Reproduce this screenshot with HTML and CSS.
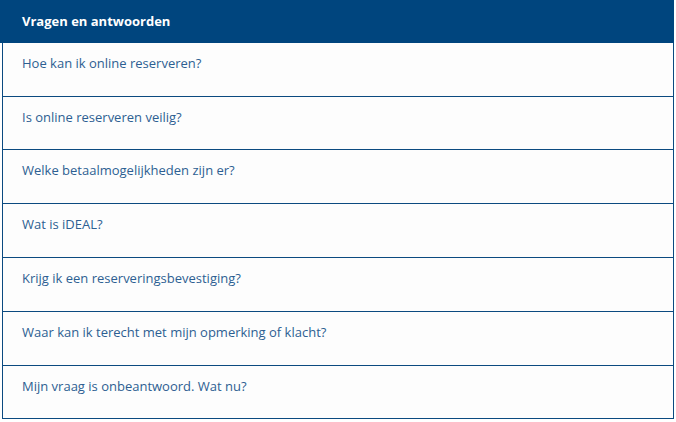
FILE: index.html
```html
<!DOCTYPE html>
<html lang="nl">
<head>
    <meta charset="utf-8">
    <title>Vragen en antwoorden</title>
    <link rel="stylesheet" href="styles.css">
</head>
<body>
    <div class="faq">
        <div class="faq-header">Vragen en antwoorden</div>
        <div class="faq-list">
            <div class="faq-item">Hoe kan ik online reserveren?</div>
            <div class="faq-item faq-item-short">Is online reserveren veilig?</div>
            <div class="faq-item">Welke betaalmogelijkheden zijn er?</div>
            <div class="faq-item">Wat is iDEAL?</div>
            <div class="faq-item">Krijg ik een reserveringsbevestiging?</div>
            <div class="faq-item">Waar kan ik terecht met mijn opmerking of klacht?</div>
            <div class="faq-item">Mijn vraag is onbeantwoord. Wat nu?</div>
        </div>
    </div>
</body>
</html>
```

FILE: styles.css
```css
body {
    margin: 0;
    background: #ffffff;
    font-family: "Open Sans", "Noto Sans", sans-serif;
}

.faq {
    width: 674px;
}

.faq-header {
    height: 43px;
    box-sizing: border-box;
    padding: 12px 22px 0;
    background: #00457e;
    color: #ffffff;
    font-size: 13px;
    font-weight: 700;
}

.faq-list {
    margin-left: 2px;
    width: 672px;
    box-sizing: border-box;
    border: 1px solid #0b4a80;
    border-top: none;
    background: #fdfdfd;
}

.faq-item {
    height: 54px;
    box-sizing: border-box;
    padding: 11px 19px 0;
    border-bottom: 1px solid #0b4a80;
    color: #2d5f92;
    font-size: 13px;
}

.faq-item-short {
    height: 53px;
}

.faq-item:last-child {
    border-bottom: none;
    height: 52px;
}
```
